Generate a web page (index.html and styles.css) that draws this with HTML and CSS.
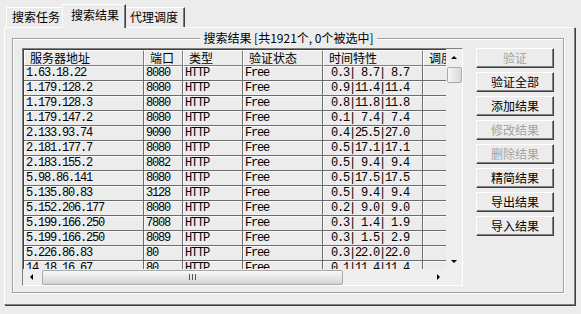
FILE: index.html
```html
<!DOCTYPE html>
<html lang="zh-CN">
<head>
    <meta charset="UTF-8">
    <title>搜索结果</title>
    <link rel="stylesheet" href="styles.css">
</head>
<body>
    <div class="tabs">
        <div class="tab first">搜索任务</div>
        <div class="tab active">搜索结果</div>
        <div class="tab last">代理调度</div>
    </div>

    <div class="panel">
        <fieldset class="group">
            <legend>搜索结果 [共1921个, 0个被选中]</legend>

            <div class="content">
                <div class="listview">
                    <div class="list-body">
                        <table class="grid">
                            <colgroup>
                                <col class="c-addr">
                                <col class="c-port">
                                <col class="c-type">
                                <col class="c-state">
                                <col class="c-time">
                                <col class="c-sched">
                            </colgroup>
                            <thead>
                                <tr>
                                    <th>服务器地址</th>
                                    <th>端口</th>
                                    <th>类型</th>
                                    <th>验证状态</th>
                                    <th>时间特性</th>
                                    <th>调度</th>
                                </tr>
                            </thead>
                            <tbody>
                                <tr><td>1.63.18.22</td><td>8080</td><td>HTTP</td><td>Free</td><td> 0.3| 8.7| 8.7</td><td></td></tr>
                                <tr><td>1.179.128.2</td><td>8080</td><td>HTTP</td><td>Free</td><td> 0.9|11.4|11.4</td><td></td></tr>
                                <tr><td>1.179.128.3</td><td>8080</td><td>HTTP</td><td>Free</td><td> 0.8|11.8|11.8</td><td></td></tr>
                                <tr><td>1.179.147.2</td><td>8080</td><td>HTTP</td><td>Free</td><td> 0.1| 7.4| 7.4</td><td></td></tr>
                                <tr><td>2.133.93.74</td><td>9090</td><td>HTTP</td><td>Free</td><td> 0.4|25.5|27.0</td><td></td></tr>
                                <tr><td>2.181.177.7</td><td>8080</td><td>HTTP</td><td>Free</td><td> 0.5|17.1|17.1</td><td></td></tr>
                                <tr><td>2.183.155.2</td><td>8082</td><td>HTTP</td><td>Free</td><td> 0.5| 9.4| 9.4</td><td></td></tr>
                                <tr><td>5.98.86.141</td><td>8080</td><td>HTTP</td><td>Free</td><td> 0.5|17.5|17.5</td><td></td></tr>
                                <tr><td>5.135.80.83</td><td>3128</td><td>HTTP</td><td>Free</td><td> 0.5| 9.4| 9.4</td><td></td></tr>
                                <tr><td>5.152.206.177</td><td>8080</td><td>HTTP</td><td>Free</td><td> 0.2| 9.0| 9.0</td><td></td></tr>
                                <tr><td>5.199.166.250</td><td>7808</td><td>HTTP</td><td>Free</td><td> 0.3| 1.4| 1.9</td><td></td></tr>
                                <tr><td>5.199.166.250</td><td>8089</td><td>HTTP</td><td>Free</td><td> 0.3| 1.5| 2.9</td><td></td></tr>
                                <tr><td>5.226.86.83</td><td>80</td><td>HTTP</td><td>Free</td><td> 0.3|22.0|22.0</td><td></td></tr>
                                <tr><td>14.18.16.67</td><td>80</td><td>HTTP</td><td>Free</td><td> 0.1|11.4|11.4</td><td></td></tr>
                            </tbody>
                        </table>
                    </div>

                    <div class="vscroll">
                        <span class="arrow up"></span>
                        <span class="vthumb"></span>
                        <span class="arrow down"></span>
                    </div>
                    <div class="hscroll">
                        <span class="arrow left"></span>
                        <span class="hthumb"><span class="grip"></span></span>
                        <span class="arrow right"></span>
                    </div>
                    <div class="corner"></div>
                </div>

                <div class="actions">
                    <button class="btn" disabled>验证</button>
                    <button class="btn">验证全部</button>
                    <button class="btn">添加结果</button>
                    <button class="btn" disabled>修改结果</button>
                    <button class="btn" disabled>删除结果</button>
                    <button class="btn">精简结果</button>
                    <button class="btn">导出结果</button>
                    <button class="btn">导入结果</button>
                </div>
            </div>
        </fieldset>
    </div>
</body>
</html>
```

FILE: styles.css
```css
body {
    margin: 0;
    width: 581px;
    height: 314px;
    overflow: hidden;
    background: #ececec;
    color: #000;
    font-family: "Noto Sans CJK SC", "Liberation Sans", sans-serif;
    font-size: 12px;
}

/* tab strip */
.tabs {
    display: flex;
    align-items: flex-end;
    height: 27px;
    padding-left: 6px;
}

.tab {
    box-sizing: border-box;
    height: 20px;
    line-height: 18px;
    border-top: 1px solid #fff;
    white-space: nowrap;
}

.tab.first {
    border-left: 1px solid #fff;
    padding: 0 2px 0 5px;
}

.tab.active {
    position: relative;
    z-index: 1;
    height: 24px;
    margin-bottom: -1px;
    line-height: 20px;
    padding: 0 6px 0 8px;
    background: #ececec;
    border-left: 1px solid #fff;
    border-right: 1px solid #404040;
    box-shadow: inset -1px 0 #808080;
}

.tab.last {
    padding: 0 6px 0 4px;
    border-right: 1px solid #404040;
    box-shadow: inset -1px 0 #808080;
}

/* tab page */
.panel {
    box-sizing: border-box;
    width: 571px;
    height: 278px;
    margin-left: 4px;
    border: 1px solid;
    border-color: #fff #808080 #808080 #fff;
    box-shadow: 1px 1px 0 #404040;
}

.group {
    box-sizing: border-box;
    width: 552px;
    margin: 3px 0 0 7px;
    padding: 3px 8px 6px 9px;
    border: 1px solid #a0a0a0;
    box-shadow: inset 1px 1px #fff, 1px 1px #fff;
}

.group legend {
    margin: 0 auto;
    padding: 0 3px;
    line-height: 14px;
    background: #ececec;
}

.content {
    display: flex;
    gap: 13px;
}

/* list view */
.listview {
    box-sizing: border-box;
    display: grid;
    grid-template-columns: 1fr 16px;
    grid-template-rows: 1fr 16px;
    width: 441px;
    height: 238px;
    border: 1px solid;
    border-color: #808080 #fff #fff #808080;
    box-shadow: inset 1px 1px #404040;
}

.list-body {
    overflow: hidden;
    padding: 1px 0 0 1px;
}

.grid {
    table-layout: fixed;
    width: 459px;
    border-collapse: separate;
    border-spacing: 0;
}

.c-addr { width: 120px; }
.c-port { width: 39px; }
.c-type { width: 60px; }
.c-state { width: 80px; }
.c-time { width: 100px; }
.c-sched { width: 60px; }

.grid th {
    box-sizing: border-box;
    height: 16px;
    padding: 0 0 0 5px;
    font-weight: normal;
    text-align: left;
    line-height: 14px;
    white-space: nowrap;
    overflow: hidden;
    border-top: 1px solid #fff;
    border-left: 1px solid #fff;
    border-right: 1px solid #808080;
    border-bottom: 1px solid #808080;
}

.grid td {
    box-sizing: border-box;
    height: 15px;
    padding: 0 0 0 2px;
    font-family: "Liberation Mono", monospace;
    font-size: 12px;
    letter-spacing: -1.2px;
    line-height: 14px;
    white-space: pre;
    overflow: hidden;
    border-right: 1px solid #6c6c6c;
    border-bottom: 1px solid #6c6c6c;
    box-shadow: inset 1px 1px #fafafa;
}

/* scroll bars */
.vscroll,
.hscroll {
    display: flex;
    align-items: center;
    background: #efefef;
}

.vscroll {
    flex-direction: column;
}

.arrow {
    display: flex;
    flex: none;
    width: 16px;
    height: 16px;
    position: relative;
}

.arrow::after {
    content: "";
    margin: auto;
    border: 3px solid transparent;
}

.arrow.up::after { border-bottom-color: #000; border-top-width: 0; }
.arrow.down::after { border-top-color: #000; border-bottom-width: 0; }
.arrow.left::after { border-right-color: #000; border-left-width: 0; }
.arrow.right::after { border-left-color: #000; border-right-width: 0; }

.vscroll .arrow.down {
    margin-top: auto;
}

.vthumb {
    box-sizing: border-box;
    width: 15px;
    height: 16px;
    margin-top: 2px;
    border: 1px solid #a9a9a9;
    border-radius: 2px;
    background: linear-gradient(90deg, #f6f6f6, #d9d9d9);
}

.hthumb {
    box-sizing: border-box;
    display: flex;
    align-items: center;
    justify-content: center;
    width: 301px;
    height: 15px;
    margin-left: 3px;
    border: 1px solid #a9a9a9;
    border-radius: 2px;
    background: linear-gradient(#f8f8f8, #d4d4d4);
}

.grip {
    width: 7px;
    height: 6px;
    background: repeating-linear-gradient(90deg, #555 0 1px, transparent 1px 3px);
}

.hscroll .arrow.right {
    margin-left: auto;
}

.corner {
    background: #efefef;
}

/* command buttons */
.actions {
    display: flex;
    flex-direction: column;
    gap: 4px;
}

.btn {
    box-sizing: border-box;
    width: 78px;
    height: 20px;
    padding: 0;
    font: inherit;
    line-height: 16px;
    color: #000;
    background: #ececec;
    border: 1px solid;
    border-color: #fff #404040 #404040 #fff;
    box-shadow: inset -1px -1px #808080;
}

.btn:disabled {
    color: #a3a3a3;
}
```
